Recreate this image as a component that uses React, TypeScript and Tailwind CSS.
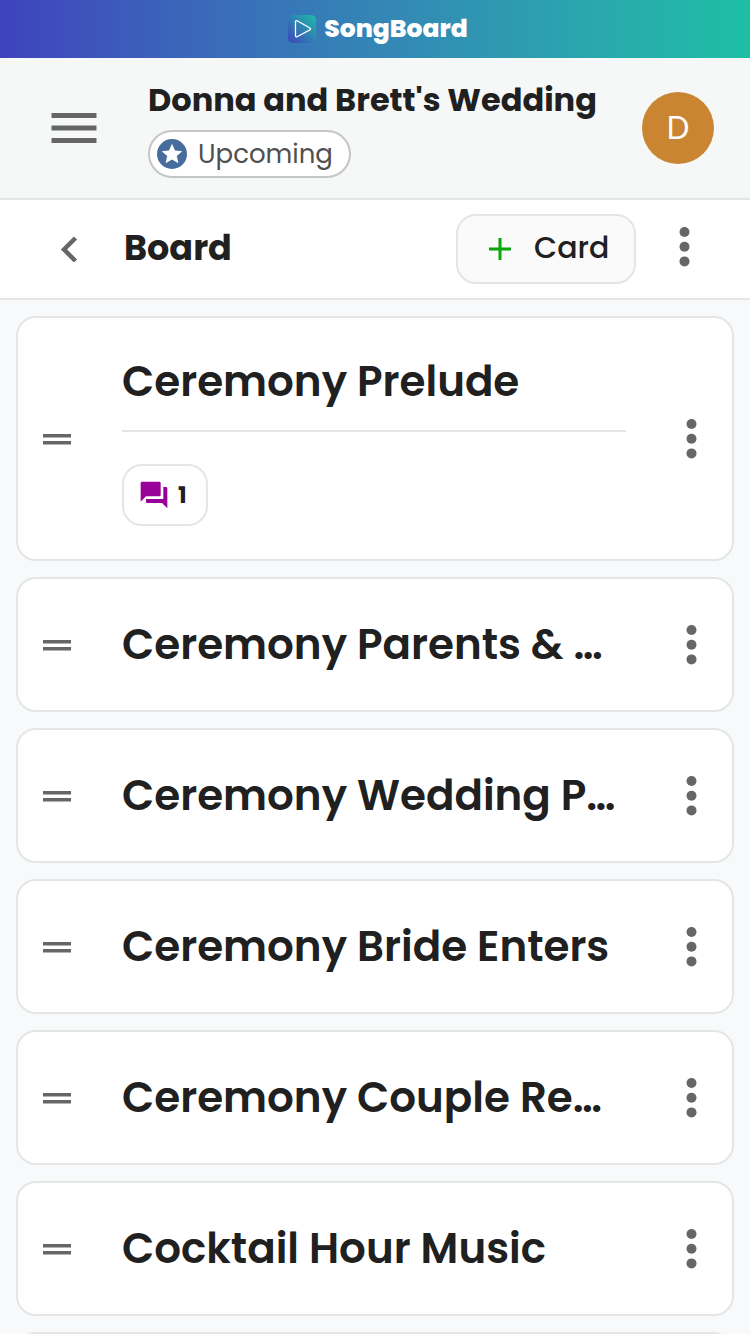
interface ICard {
    id: number;
    title: string;
    comments?: number;
}

const cards: ICard[] = [
    { id: 1, title: "Ceremony Prelude", comments: 1 },
    { id: 2, title: "Ceremony Parents & …" },
    { id: 3, title: "Ceremony Wedding P…" },
    { id: 4, title: "Ceremony Bride Enters" },
    { id: 5, title: "Ceremony Couple Re…" },
    { id: 6, title: "Cocktail Hour Music" },
];

const DotsIcon = () => (
    <svg className="h-10 w-3" viewBox="0 0 12 40" fill="#666666" aria-hidden="true">
        <circle cx="5.5" cy="5" r="5" />
        <circle cx="5.5" cy="19.7" r="5" />
        <circle cx="5.5" cy="34.4" r="5" />
    </svg>
);

const Banner = () => (
    <div className="flex h-[58px] shrink-0 items-center justify-center gap-2 bg-linear-to-r from-[#3f42bd] to-[#1dbfa5] pl-1.5 text-white">
        <svg className="mb-px size-7" viewBox="0 0 28 28" aria-hidden="true">
            <defs>
                <linearGradient id="logo" x1="0" y1="1" x2="1" y2="0">
                    <stop offset="0" stopColor="#3f42bd" />
                    <stop offset="0.5" stopColor="#2f80b2" />
                    <stop offset="1" stopColor="#1dbfa5" />
                </linearGradient>
            </defs>
            <rect width="28" height="28" rx="5" fill="url(#logo)" />
            <path d="M7.5 7v13.700c0 1 .8 1.400 1.600 1l12.800-6.800c.9-.5.9-1.400 0-1.900L9.100 5.800c-.8-.5-1.600 0-1.600 1.200Z" fill="none" stroke="white" strokeWidth="1.3" strokeLinejoin="round" />
        </svg>
        <span className="text-[25px] font-extrabold">SongBoard</span>
    </div>
);

const Header = () => (
    <header className="flex h-[142px] shrink-0 items-center border-b-2 border-[#e4e6e6] bg-[#f6f8f8] pr-9 pl-[51px]">
        <button type="button" aria-label="Open menu" className="mr-[51px]">
            <svg className="h-[30px] w-[46px]" viewBox="0 0 46 30" fill="#666666" aria-hidden="true">
                <path d="M0.5 0h45v5H0.5zM0.5 12.500h45v5H0.5zM0.5 25h45v5H0.5z" />
            </svg>
        </button>
        <div className="flex min-w-0 flex-1 flex-col items-start gap-2">
            <h1 className="max-w-full truncate text-[32px] leading-[44px] font-bold">Donna and Brett's Wedding</h1>
            <div className="flex h-12 items-center gap-[11px] rounded-full border-2 border-[#c4c6c6] bg-white pr-4 pl-[7px]">
                <svg className="size-[30px]" viewBox="0 0 30 30" aria-hidden="true">
                    <circle cx="15" cy="15" r="15" fill="#476c9e" />
                    <path d="M15 4.800l3 6.700 7.300.7-5.500 4.900 1.600 7.200L15 20.500l-6.400 3.800 1.600-7.200-5.500-4.900 7.300-.7z" fill="white" />
                </svg>
                <span className="pb-px text-[26px] leading-10 text-[#505050]">Upcoming</span>
            </div>
        </div>
        <button type="button" aria-label="Account" className="size-[72px] rounded-full bg-[#ca8532] text-[32px] text-white">D</button>
    </header>
);

const Toolbar = () => (
    <div className="flex h-[100px] shrink-0 items-center border-b-2 border-[#e4e6e6] bg-white pr-[59px] pl-[60px]">
        <button type="button" aria-label="Back" className="mr-[46px]">
            <svg className="h-[26px] w-[18px]" viewBox="0 0 18 26" fill="none" stroke="#666666" strokeWidth="4.5" aria-hidden="true">
                <path d="M15.5 2L4 13.500 15.500 25" />
            </svg>
        </button>
        <h2 className="flex-1 pb-0.5 text-[35px] font-bold">Board</h2>
        <button type="button" className="mr-[43px] flex h-[70px] w-[180px] items-center gap-[23px] rounded-[20px] border-2 border-[#e4e6e6] bg-[#fafafa] pb-1 pl-[31px] text-[30px] font-medium">
            <svg className="mt-1 size-[22px]" viewBox="0 0 22 22" fill="#09a609" aria-hidden="true">
                <path d="M9.500 0h3v9.500H22v3h-9.500V22h-3v-9.500H0v-3h9.500z" />
            </svg>
            Card
        </button>
        <button type="button" aria-label="Board options" className="pb-1">
            <DotsIcon />
        </button>
    </div>
);

const BoardCard = ({ card }: { card: ICard }) => (
    <li className="flex shrink-0 items-center rounded-[20px] border-2 border-[#e4e6e6] bg-white pr-[34px] pl-[25px]">
        <button type="button" aria-label={`Move ${card.title}`} className="mr-[51px] pt-0.5">
            <svg className="h-[11px] w-7" viewBox="0 0 28 11" fill="#666666" aria-hidden="true">
                <path d="M0 0h28v3.500H0zM0 7h28v3.500H0z" />
            </svg>
        </button>
        <div className={card.comments ? "min-w-0 flex-1 pt-[30px] pb-[33px]" : "min-w-0 flex-1 py-8"}>
            <h3 className="truncate text-[42px] leading-[67px] font-semibold">{card.title}</h3>
            {card.comments && (
                <div className="mt-[15px] border-t-2 border-[#e4e6e6] pt-8">
                    <button type="button" aria-label={`${card.comments} comment`} className="flex h-[62px] w-[86px] items-center gap-[10px] rounded-[20px] border-2 border-[#e4e6e6] pl-4 text-[23px] font-bold">
                        <svg className="size-7" viewBox="1.500 1.500 21 21" fill="#990099" aria-hidden="true">
                            <path d="M21 6h-2v9H6v2c0 .55.45 1 1 1h11l4 4V7c0-.55-.45-1-1-1zm-4 6V3c0-.55-.45-1-1-1H3c-.55 0-1 .45-1 1v14l4-4h10c.55 0 1-.45 1-1z" />
                        </svg>
                        {card.comments}
                    </button>
                </div>
            )}
        </div>
        <button type="button" aria-label={`${card.title} options`} className="ml-[60px]">
            <DotsIcon />
        </button>
    </li>
);

export default function App() {
    return (
        <div className="flex h-screen flex-col overflow-hidden bg-[#f7f9fb] font-[Poppins,Inter,sans-serif] text-[#202020]">
            <Banner />
            <Header />
            <Toolbar />
            <main className="min-h-0 flex-1 overflow-hidden p-4">
                <ul className="flex flex-col gap-4">
                    {cards.map((card) => (
                        <BoardCard key={card.id} card={card} />
                    ))}
                    <li className="h-[135px] rounded-[20px] border-2 border-[#e4e6e6] bg-white" />
                </ul>
            </main>
        </div>
    );
}
